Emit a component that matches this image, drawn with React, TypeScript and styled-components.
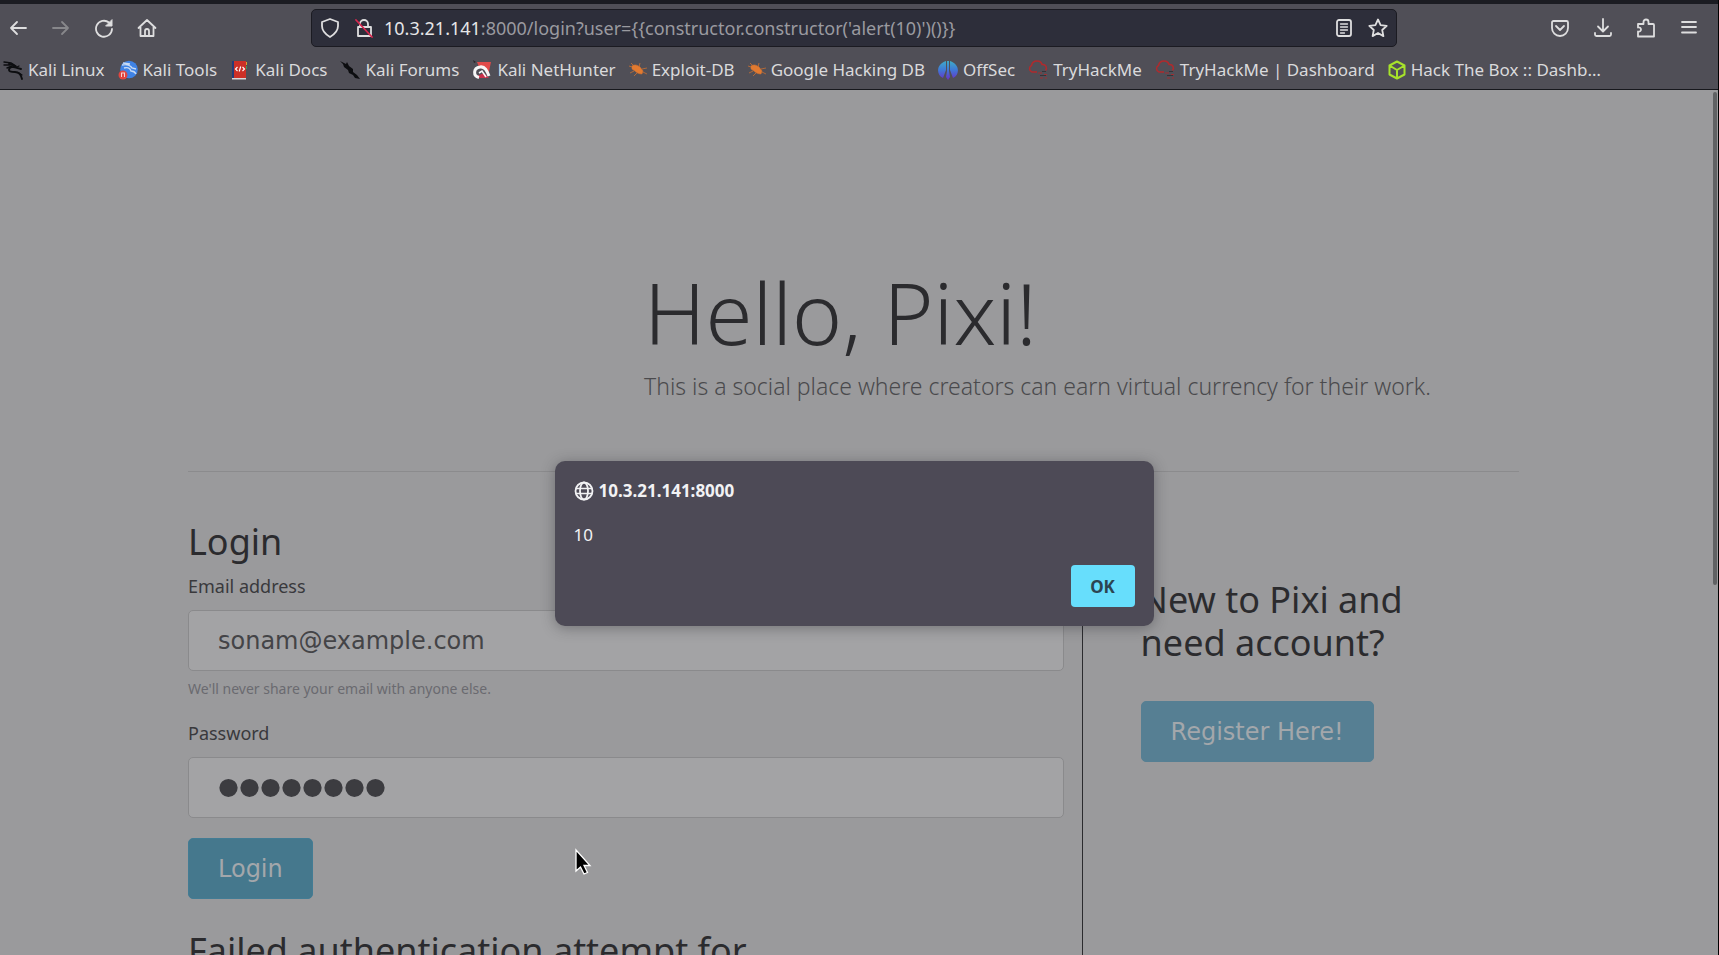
import React from 'react';
import styled, { createGlobalStyle } from 'styled-components';

const ui = '"Noto Sans", "Open Sans", sans-serif';
const form = '"DejaVu Sans", sans-serif';

const GlobalStyle = createGlobalStyle`
  *, *::before, *::after { box-sizing: border-box; }
  body { margin: 0; background: #000; font-family: ${ui}; }
  h1, h2, p { margin: 0; }
  svg { display: block; flex: none; }
`;

const Browser = styled.div`
  position: relative;
  height: 100vh;
  display: flex;
  flex-direction: column;
  overflow: hidden;
  border-right: 1px solid #000;
`;

const TitleStrip = styled.div`
  flex: none;
  height: 4px;
  background: #1b1c22;
`;

const Chrome = styled.header`
  flex: none;
  background: #504f57;
  border-bottom: 1px solid #17181d;
  color: #dededf;
`;

const Toolbar = styled.div`
  display: flex;
  align-items: center;
  height: 48px;
  padding: 0 19px 0 8px;
`;

const ButtonGroup = styled.div<{ $tight?: boolean }>`
  display: flex;
  gap: ${(p) => (p.$tight ? '14px' : '23px')};
`;

const IconButton = styled.button<{ $dim?: boolean }>`
  width: 20px;
  height: 20px;
  padding: 0;
  border: 0;
  background: none;
  color: ${(p) => (p.$dim ? '#87878b' : '#dededf')};
`;

const AddressBar = styled.div`
  flex: 1;
  display: flex;
  align-items: center;
  gap: 10px;
  height: 38px;
  margin: 0 153px 0 154px;
  padding: 0 8px;
  background: #2d2e3a;
  border: 1px solid #1b1b22;
  border-radius: 5px;
`;

const Address = styled.div`
  flex: 1;
  font-size: 18px;
  line-height: 24px;
  color: #9a9aa0;
  white-space: nowrap;
`;

const Host = styled.span`
  color: #e6e6e8;
`;

const Bookmarks = styled.nav`
  display: flex;
  gap: 13px;
  height: 37px;
  padding: 0 3px 2px;
  align-items: center;
`;

const Bookmark = styled.a`
  display: flex;
  align-items: center;
  gap: 5px;
  color: #dadadc;
  font-size: 17px;
  line-height: 24px;
  text-decoration: none;
  white-space: nowrap;
`;

const Viewport = styled.main`
  position: relative;
  flex: 1;
  min-height: 0;
  overflow: hidden;
  padding: 0 199px 0 188px;
  background: #9a9a9c;
  color: #2b2b2e;
`;

const ScrollThumb = styled.div`
  position: absolute;
  top: 2px;
  right: 1px;
  width: 4px;
  height: 57%;
  border-radius: 2px;
  background: #606163;
`;

const Hero = styled.section`
  padding: 172px 0 67px 456px;
  border-bottom: 1px solid #8b8b8d;
  white-space: nowrap;
`;

const HeroTitle = styled.h1`
  font-size: 85px;
  line-height: 100px;
  font-weight: 300;
`;

const HeroText = styled.p`
  margin-top: 6px;
  font-size: 23px;
  line-height: 36px;
  font-weight: 300;
  color: #4a4a4d;
`;

const Columns = styled.div`
  display: grid;
  grid-template-columns: 41fr 20fr;
  margin-top: 48px;
`;

const LoginColumn = styled.form`
  padding-right: 18px;
  border-right: 1px solid #2b2b2e;
`;

const RegisterColumn = styled.section`
  padding: 58px 80px 0 58px;
`;

const Heading = styled.h2<{ $spaced?: boolean }>`
  margin-top: ${(p) => (p.$spaced ? '30px' : '0')};
  font-size: 36px;
  line-height: 43px;
  font-weight: 400;
`;

const Label = styled.label`
  display: block;
  margin: 9px 0 10px;
  font-size: 18px;
  line-height: 28px;
  color: #39393c;
`;

const Field = styled.input`
  display: block;
  width: 100%;
  height: 61px;
  padding: 0 29px;
  border: 1px solid #8a8a8c;
  border-radius: 5px;
  background: #a3a3a5;
  color: #444447;
  font-family: ${form};
  font-size: 24px;
  outline: none;

  &[type='password'] {
    font-family: "Liberation Sans", sans-serif;
    font-size: 60px;
    color: #3c3c40;
    -webkit-text-stroke: 2px #3c3c40;
  }
`;

const Help = styled.p`
  margin: 6px 0 18px;
  font-size: 14px;
  line-height: 24px;
  color: #6a6a70;
`;

const Action = styled.button<{ $soft?: boolean }>`
  display: block;
  height: 61px;
  margin-top: ${(p) => (p.$soft ? '37px' : '20px')};
  padding: 0 29px;
  border: 1px solid ${(p) => (p.$soft ? '#567f93' : '#437c94')};
  border-radius: 5px;
  background: ${(p) => (p.$soft ? '#567f93' : '#45788d')};
  color: #a3a7ab;
  font-family: ${form};
  font-size: 24px;
`;

const Overlay = styled.div`
  position: absolute;
  inset: 461px 10px auto 0;
  display: flex;
  justify-content: center;
`;

const Dialog = styled.div`
  width: 599px;
  padding: 18px 19px 19px;
  border-radius: 10px;
  background: #4d4a56;
  box-shadow: 0 2px 14px rgba(40, 40, 46, 0.4);
  color: #f2f2f4;
  font-size: 17px;
  line-height: 24px;
`;

const DialogTitle = styled.div`
  display: flex;
  align-items: center;
  gap: 5px;
  font-weight: 700;
`;

const DialogText = styled.p`
  margin: 20px 0 18px;
`;

const DialogButton = styled.button`
  display: block;
  width: 64px;
  height: 42px;
  margin-left: auto;
  border: 0;
  border-radius: 4px;
  background: #67defc;
  color: #2c4552;
  font-family: ${ui};
  font-size: 17px;
  font-weight: 700;
`;

const Pointer = styled.svg`
  position: absolute;
  left: 574px;
  top: 848px;
`;

function Line({ children }: { children: React.ReactNode }) {
  return (
    <svg width="20" height="20" viewBox="0 0 20 20" fill="none" stroke="currentColor" strokeWidth="1.8" strokeLinecap="round" strokeLinejoin="round" aria-hidden="true">
      {children}
    </svg>
  );
}

const DragonIcon = () => (
  <svg width="20" height="20" viewBox="0 0 20 20" fill="none" stroke="#0c0d10" strokeLinecap="round">
    <path d="M1 2l7 1 5 3M1 5l6 0M4 8l5-2" strokeWidth="1.4" />
    <path d="M6 4c4 0 6 2 8 4l4 1M14 8c-4-2-8-1-8 2 0 2 3 2 6 2 4 0 6 2 7 7" strokeWidth="1.9" />
    <path d="M14 7l2-1M16 13l3 2" strokeWidth="1.2" />
  </svg>
);

const ToolsIcon = () => (
  <svg width="20" height="20" viewBox="0 0 20 20">
    <circle cx="11" cy="9.5" r="8.8" fill="#3f83e6" />
    <path d="M4 5c5-1 8 0 10 3l4 1M6 8c3-1 6 0 7 3 2 0 4 1 5 3M5 3l7 1" fill="none" stroke="#c9dbf4" strokeWidth="1.4" />
    <circle cx="5" cy="15" r="4.5" fill="#e2453f" />
    <path d="M3.5 17v-4M6.5 17v-4M3 13h4" stroke="#f2d4d2" strokeWidth="1" />
  </svg>
);

const DocsIcon = () => (
  <svg width="20" height="20" viewBox="0 0 20 20">
    <path d="M2 1h14v17H2z" fill="#cc3027" />
    <path d="M2 1h2v17H2z" fill="#253c78" />
    <path d="M16 2h1v3h-1z" fill="#dba52d" />
    <path d="M16 6h1v3h-1z" fill="#3b9a55" />
    <path d="M2 18h14v1.5H2z" fill="#d8d8da" />
    <path d="M7.5 7L5.5 9l2 2M12.5 7l2 2-2 2M10.7 6.5l-1.5 5" fill="none" stroke="#fff" strokeWidth="1.1" />
  </svg>
);

const ForumsIcon = () => (
  <svg width="20" height="20" viewBox="0 0 20 20" fill="#0c0d10">
    <path d="M0 1l6 3 1-2 2 4 4 3 0 3 4 3 3 4-5-1-2-3-4-2-1-3-4-3-1-3z" />
  </svg>
);

const NetHunterIcon = () => (
  <svg width="20" height="20" viewBox="0 0 20 20">
    <path d="M5 2h14l-3 14-3-6-6-3z" fill="#e04a4a" />
    <path d="M1 0l3 2-2 1z" fill="#2a2429" />
    <path d="M5 16l7-3 5 5H7z" fill="#c9304a" />
    <path d="M7 17.5C1 16 1 8 8 7c5-1 7 4 9 9" fill="none" stroke="#f6f6f7" strokeWidth="3" />
    <path d="M7 13l3-2 4 6" fill="none" stroke="#f6f6f7" strokeWidth="1.6" />
  </svg>
);

const BugIcon = () => (
  <svg width="18" height="20" viewBox="0 0 18 20" fill="#e27a30" stroke="#d9742e">
    <path d="M3 6c3-2 5-1 8 1l3 4-1 3c-3 0-5-1-7-3L3 9z" strokeWidth=".5" />
    <path d="M5 6L2 3M10 7l1-4M13 9l5-1M5 11l-4 2M8 13l-3 3M14 12l4 2M3 7L0 6" strokeWidth=".7" />
  </svg>
);

const OffSecIcon = () => (
  <svg width="20" height="20" viewBox="0 0 20 20">
    <defs>
      <linearGradient id="offsec" x1="0" y1="0" x2="0" y2="20" gradientUnits="userSpaceOnUse">
        <stop offset="0" stopColor="#3fb1c4" />
        <stop offset=".5" stopColor="#3f78d6" />
        <stop offset="1" stopColor="#6a2fc8" />
      </linearGradient>
    </defs>
    <path d="M8 1C-2 4-2 15 5 18l3-8zM12 1c10 3 10 14 3 17l-3-8zM9 1h2v10l1 6-2 3-2-3 1-6z" fill="url(#offsec)" />
  </svg>
);

const CloudIcon = () => (
  <svg width="20" height="20" viewBox="0 0 20 20" fill="none">
    <path d="M9 12H4a3.500 3.500 0 01-.5-6.500C4 3 5.500 1 9 1c3 0 4.500 1.500 5 3.500 4-.5 5.500 3.500 3.500 6" stroke="#b02a2d" strokeWidth="1.500" />
    <path d="M10 13h4M16 14.5h3M12 18h3M17 18h2" stroke="#a02f32" strokeWidth="1.2" />
    <path d="M12 15.5h6M14 11.5h4" stroke="#33343a" strokeWidth="1" />
  </svg>
);

const BoxIcon = () => (
  <svg width="18" height="20" viewBox="0 0 18 20" fill="none" stroke="#a6e22b" strokeWidth="2" strokeLinejoin="round">
    <path d="M9 1.5l7.5 4v9L9 18.5l-7.5-4v-9zM1.5 5.5L9 10l7.5-4.5M9 10v8" />
  </svg>
);

const bookmarks: [string, () => React.JSX.Element][] = [
  ['Kali Linux', DragonIcon],
  ['Kali Tools', ToolsIcon],
  ['Kali Docs', DocsIcon],
  ['Kali Forums', ForumsIcon],
  ['Kali NetHunter', NetHunterIcon],
  ['Exploit-DB', BugIcon],
  ['Google Hacking DB', BugIcon],
  ['OffSec', OffSecIcon],
  ['TryHackMe', CloudIcon],
  ['TryHackMe | Dashboard', CloudIcon],
  ['Hack The Box :: Dashb…', BoxIcon],
];

export default function App() {
  return (
    <Browser>
      <GlobalStyle />
      <TitleStrip />
      <Chrome>
        <Toolbar>
          <ButtonGroup>
            <IconButton aria-label="Back"><Line><path d="M18 10H3M9 4l-6 6 6 6" /></Line></IconButton>
            <IconButton aria-label="Forward" $dim><Line><path d="M2 10h15M11 4l6 6-6 6" /></Line></IconButton>
            <IconButton aria-label="Reload">
              <Line>
                <path d="M18 11a8 8 0 11-3-6.5" />
                <path d="M18 2v6h-6z" fill="currentColor" strokeWidth="1" />
              </Line>
            </IconButton>
            <IconButton aria-label="Home">
              <Line><path d="M1.5 10L10 2l8.500 8M3.5 9v9h13V9M8 18v-5a2 2 0 014 0v5" /></Line>
            </IconButton>
          </ButtonGroup>
          <AddressBar>
            <ButtonGroup $tight>
              <IconButton aria-label="Tracking protection">
                <Line><path d="M10 1l8 3v4c0 5-3 8-8 11C5 16 2 13 2 8V4z" /></Line>
              </IconButton>
              <IconButton aria-label="Connection is not secure">
                <Line>
                  <path d="M4 9h13v9H4zM6 9V6a4 4 0 018 0v3" />
                  <path d="M2 2l16 17" stroke="#d8274f" />
                </Line>
              </IconButton>
            </ButtonGroup>
            <Address><Host>10.3.21.141</Host>:8000/login?user=&#123;&#123;constructor.constructor('alert(10)')()&#125;&#125;</Address>
            <ButtonGroup $tight>
              <IconButton aria-label="Reader view">
                <Line><rect x="3" y="2" width="14" height="16" rx="2" /><path d="M6.5 6h7M6.5 9h7M6.5 12h7M6.5 15h4" strokeWidth="1.3" /></Line>
              </IconButton>
              <IconButton aria-label="Bookmark this page">
                <Line><path d="M10 1.5l2.600 5.600 6.100.7-4.500 4.200 1.200 6.100L10 15l-5.400 3.100L5.800 12 1.300 7.800l6.100-.7z" /></Line>
              </IconButton>
            </ButtonGroup>
          </AddressBar>
          <ButtonGroup>
            <IconButton aria-label="Save to Pocket">
              <Line><path d="M3.5 3h13A1.5 1.5 0 0118 4.5V10a8 8 0 01-16 0V4.5A1.5 1.5 0 013.5 3zM6 8l4 4 4-4" /></Line>
            </IconButton>
            <IconButton aria-label="Downloads">
              <Line><path d="M10 1v12M5 8.5l5 5 5-5M2 15v1.5A1.5 1.5 0 003.5 18h13a1.5 1.5 0 001.5-1.5V15" /></Line>
            </IconButton>
            <IconButton aria-label="Extensions">
              <Line><path d="M2 18.5v-5c4 1 4-5 0-4V6h5.500V4a2.500 2.500 0 015 0v2H17a1 1 0 011 1v11.500z" /></Line>
            </IconButton>
            <IconButton aria-label="Menu">
              <Line><path d="M3 4h14M3 9h14M3 14.5h14" /></Line>
            </IconButton>
          </ButtonGroup>
        </Toolbar>
        <Bookmarks>
          {bookmarks.map(([name, Icon]) => (
            <Bookmark href="#" key={name}>
              <Icon />
              {name}
            </Bookmark>
          ))}
        </Bookmarks>
      </Chrome>
      <Viewport>
        <Hero>
          <HeroTitle>Hello, Pixi!</HeroTitle>
          <HeroText>This is a social place where creators can earn virtual currency for their work.</HeroText>
        </Hero>
        <Columns>
          <LoginColumn onSubmit={(e) => e.preventDefault()}>
            <Heading>Login</Heading>
            <Label htmlFor="email">Email address</Label>
            <Field id="email" type="email" defaultValue="sonam@example.com" />
            <Help>We'll never share your email with anyone else.</Help>
            <Label htmlFor="password">Password</Label>
            <Field id="password" type="password" defaultValue="password" />
            <Action type="submit">Login</Action>
            <Heading $spaced>Failed authentication attempt for</Heading>
          </LoginColumn>
          <RegisterColumn>
            <Heading>New to Pixi and need account?</Heading>
            <Action type="button" $soft>Register Here!</Action>
          </RegisterColumn>
        </Columns>
        <ScrollThumb />
      </Viewport>
      <Overlay>
        <Dialog role="dialog" aria-modal="true" aria-labelledby="dialog-title">
          <DialogTitle id="dialog-title">
            <Line><circle cx="10" cy="10" r="8.5" /><ellipse cx="10" cy="10" rx="4" ry="8.5" /><path d="M2 7.5h16M2 12.5h16" strokeWidth="1.5" /></Line>
            10.3.21.141:8000
          </DialogTitle>
          <DialogText>10</DialogText>
          <DialogButton>OK</DialogButton>
        </Dialog>
      </Overlay>
      <Pointer width="18" height="28" viewBox="0 0 18 28" aria-hidden="true">
        <path d="M2 2v21l4.5-4 3.500 7 3.500-1.500-3.500-7H16z" fill="#000" stroke="#fff" strokeWidth="1.3" />
      </Pointer>
    </Browser>
  );
}
